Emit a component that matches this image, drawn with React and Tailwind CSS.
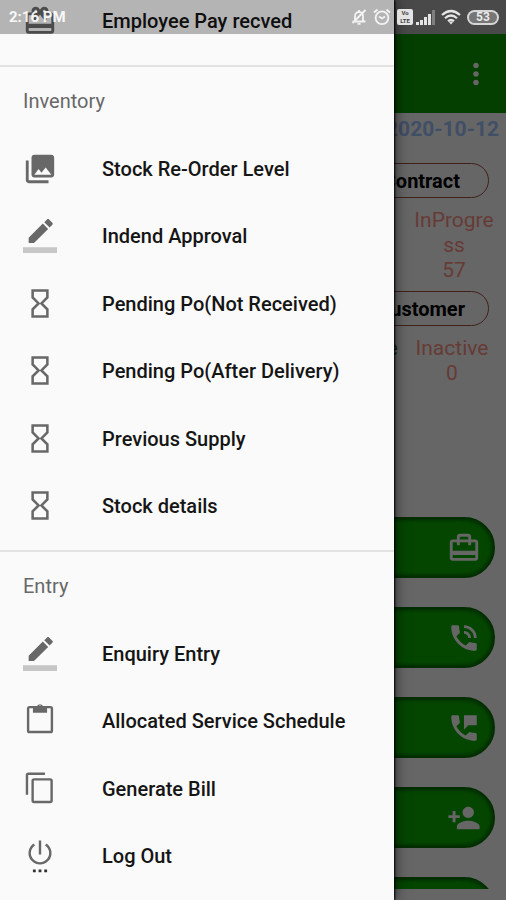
import React from 'react';
import {
  MdCardGiftcard,
  MdCardTravel,
  MdCollections,
  MdMoreVert,
  MdPermPhoneMsg,
  MdPersonAdd,
  MdPhoneInTalk,
} from 'react-icons/md';

const BorderColorIcon = (props) => (
  <svg viewBox="0 0 24 24" fill="currentColor" {...props}>
    <path d="M17.75 7L14 3.25l-10 10V17h3.75l10-10zm2.96-2.96c.39-.39.39-1.02 0-1.41L18.37.29c-.39-.39-1.02-.39-1.41 0L15 2.25 18.75 6l1.96-1.96z" />
    <path fillOpacity=".36" d="M0 20h24v4H0z" />
  </svg>
);

const HourglassIcon = (props) => (
  <svg viewBox="0 0 24 24" fill="none" stroke="currentColor" strokeWidth="1.8" {...props}>
    <path d="M6.8 2.4h10.4v5L13 11.6l4.2 4.2v5H6.8v-5L11 11.6 6.8 7.4z" />
  </svg>
);

const ClipboardIcon = (props) => (
  <svg viewBox="0 0 24 24" fill="none" stroke="currentColor" strokeWidth="1.7" {...props}>
    <rect x="3.6" y="2.2" width="16.8" height="17.6" rx="1" />
    <path
      d="M7 2h2.6a2.5 2.5 0 0 1 4.8 0H17v4.2H7zm5-.9a.9.9 0 1 0 0 1.8.9.9 0 0 0 0-1.8z"
      fill="currentColor"
      fillRule="evenodd"
      stroke="none"
    />
  </svg>
);

const CopyIcon = (props) => (
  <svg viewBox="0 0 24 24" fill="none" stroke="currentColor" strokeWidth="1.7" {...props}>
    <path d="M2.8 16V2.2a1 1 0 0 1 1-1H15.5" />
    <rect x="6.8" y="5.2" width="13.4" height="16" rx="1" />
  </svg>
);

const PowerIcon = (props) => (
  <svg viewBox="0 0 24 24" fill="none" stroke="currentColor" strokeWidth="1.7" {...props}>
    <path d="M12 1v10M8 3.8a7.3 7.3 0 1 0 8 0" />
    <path d="M7 21.5h2v2H7zM11 21.5h2v2h-2zM15 21.5h2v2h-2z" fill="#333" stroke="none" />
  </svg>
);

const inventoryItems = [
  { label: 'Stock Re-Order Level', icon: MdCollections },
  { label: 'Indend Approval', icon: BorderColorIcon },
  { label: 'Pending Po(Not Received)', icon: HourglassIcon },
  { label: 'Pending Po(After Delivery)', icon: HourglassIcon },
  { label: 'Previous Supply', icon: HourglassIcon },
  { label: 'Stock details', icon: HourglassIcon },
];

const entryItems = [
  { label: 'Enquiry Entry', icon: BorderColorIcon },
  { label: 'Allocated Service Schedule', icon: ClipboardIcon },
  { label: 'Generate Bill', icon: CopyIcon },
  { label: 'Log Out', icon: PowerIcon },
];

const actions = [
  { label: 'Travel', icon: MdCardTravel },
  { label: 'Calls', icon: MdPhoneInTalk },
  { label: 'Messages', icon: MdPermPhoneMsg },
  { label: 'Add customer', icon: MdPersonAdd },
  { label: 'More' },
];

const NavItem = ({ label, icon: Icon }) => (
  <a href="#" className="flex items-center pl-[23px] text-[20px] leading-6 font-medium text-[#151515]">
    <Icon className="mr-[45px] size-[34px] shrink-0 text-[#686868]" />
    <span className="whitespace-nowrap">{label}</span>
  </a>
);

const NavHeading = ({ children }) => (
  <h2 className="flex h-[70px] items-center border-t-2 border-[#e3e3e3] pl-[23px] text-[20px] leading-6 text-[#686868]">
    {children}
  </h2>
);

const Drawer = () => (
  <nav className="absolute inset-y-0 left-0 w-[394px] overflow-hidden bg-[#fafafa] shadow-[1px_0_2px_#000,2px_0_12px_#00000080]">
    <div className="grid h-[65px] content-start">
      <div className="grid h-[42px]">
        <NavItem label="Employee Pay recved" icon={MdCardGiftcard} />
      </div>
    </div>
    <NavHeading>Inventory</NavHeading>
    <div className="grid h-[405px] auto-rows-fr">
      {inventoryItems.map((item) => (
        <NavItem key={item.label} {...item} />
      ))}
    </div>
    <div className="pt-[10px]">
      <NavHeading>Entry</NavHeading>
    </div>
    <div className="grid h-[270px] auto-rows-fr">
      {entryItems.map((item) => (
        <NavItem key={item.label} {...item} />
      ))}
    </div>
  </nav>
);

const StatusBar = () => (
  <div className="absolute inset-x-0 top-0 flex h-[34px] items-center justify-between bg-black/28 pr-[7px] pl-[9px] text-white">
    <span className="text-[15px] leading-5 font-bold text-white/90">2:16 PM</span>
    <div className="flex items-center gap-[6px] text-white/85">
      {/* muted bell */}
      <svg className="size-4" viewBox="0 0 16 16" fill="none" stroke="currentColor" strokeWidth="1.8">
        <path d="M1.5 12.5h13M4 12V7a4 4 0 0 1 8 0v5M8 3V1M6.5 14.8h3M14.5 1l-13 13" />
      </svg>
      {/* alarm */}
      <svg className="size-[18px]" viewBox="0 0 18 18" fill="none" stroke="currentColor" strokeWidth="1.8">
        <circle cx="9" cy="9.8" r="6.4" />
        <path d="M6 8.5l3 2 3-2M1 4.5l3.5-3M17 4.5l-3.5-3" />
      </svg>
      <div className="flex items-center gap-[3px]">
        <span className="flex h-4 w-4 flex-col items-center justify-center rounded-xs bg-white/85 text-[6px] leading-[8px] font-bold text-[#444]">
          <span>Vo</span>
          <span>LTE</span>
        </span>
        <svg className="h-[15px] w-[19px]" viewBox="0 0 19 15" fill="currentColor">
          <path d="M0 12h3v3H0zM4 10h3v5H4zM8 7h3v8H8zM12 4h3v11h-3z" />
          <path fillOpacity=".35" d="M16 0h3v15h-3z" />
        </svg>
      </div>
      <svg className="h-4 w-5" viewBox="0 0 20 16" fill="none" stroke="currentColor" strokeWidth="2.2">
        <path d="M1 6Q10-2 19 6M4 9.2q6-5.4 12 0M7 12.2q3-2.6 6 0" />
        <path d="M7.5 12.5l2.5 3 2.5-3z" fill="currentColor" stroke="none" />
      </svg>
      <span className="flex h-[15px] w-8 items-center justify-center rounded-full border-2 border-white/70 bg-white/25 text-[12px] leading-3 font-bold">
        53
      </span>
    </div>
  </div>
);

const Stat = ({ label, value }) => (
  <dl className="w-[82px] text-center text-[21px] leading-[25px] break-all">
    <dt>{label}</dt>
    <dd>{value}</dd>
  </dl>
);

const Dashboard = () => (
  <main className="flex min-h-full flex-col bg-white pt-[34px]">
    <header className="flex h-[79px] items-center justify-end bg-[#0a9f00] pr-[13px]">
      <button type="button" aria-label="More options" className="text-white">
        <MdMoreVert className="size-[34px]" />
      </button>
    </header>
    <p className="pt-0.5 pr-[7px] text-right text-[21px] leading-7 font-bold text-[#a0c4ff]">2020-10-12</p>
    <section className="mt-5 pr-[17px]">
      <button type="button" className="flex h-[35px] w-full items-center justify-end rounded-full border border-[#a05040] pr-7 text-[20px] leading-6 font-bold text-black">
        Contract
      </button>
    </section>
    <div className="flex h-[93px] justify-end pt-[10px] pr-[11px] text-[#ff9588]">
      <Stat label="InProgress" value="57" />
    </div>
    <section className="pr-[17px]">
      <button type="button" className="flex h-[35px] w-full items-center justify-end rounded-full border border-[#a05040] pr-[23px] text-[20px] leading-6 font-bold text-black">
        Customer
      </button>
    </section>
    <div className="flex h-[191px] justify-end pt-[10px] pr-[13px]">
      <div className="text-[#3c7a3c]">
        <p className="pr-[13px] text-[21px] leading-[25px]">e</p>
      </div>
      <div className="text-[#ff9588]">
        <Stat label="Inactive" value="0" />
      </div>
    </div>
    <div className="flex h-[372px] flex-col gap-[29px] overflow-hidden pr-[11px]">
      {actions.map(({ label, icon: Icon }) => (
        <button
          key={label}
          type="button"
          aria-label={label}
          className="flex h-[61px] shrink-0 items-center justify-end rounded-full border-2 border-[#067000] bg-[#0bb000] pr-3 text-white shadow-[inset_0_0_5px_#034000]"
        >
          {Icon && <Icon className="size-[34px]" />}
        </button>
      ))}
    </div>
  </main>
);

const App = () => (
  <div className="relative h-screen overflow-hidden bg-white font-['Roboto',sans-serif]">
    <Dashboard />
    <div className="absolute inset-0 bg-black/60" />
    <Drawer />
    <StatusBar />
  </div>
);

export default App;
